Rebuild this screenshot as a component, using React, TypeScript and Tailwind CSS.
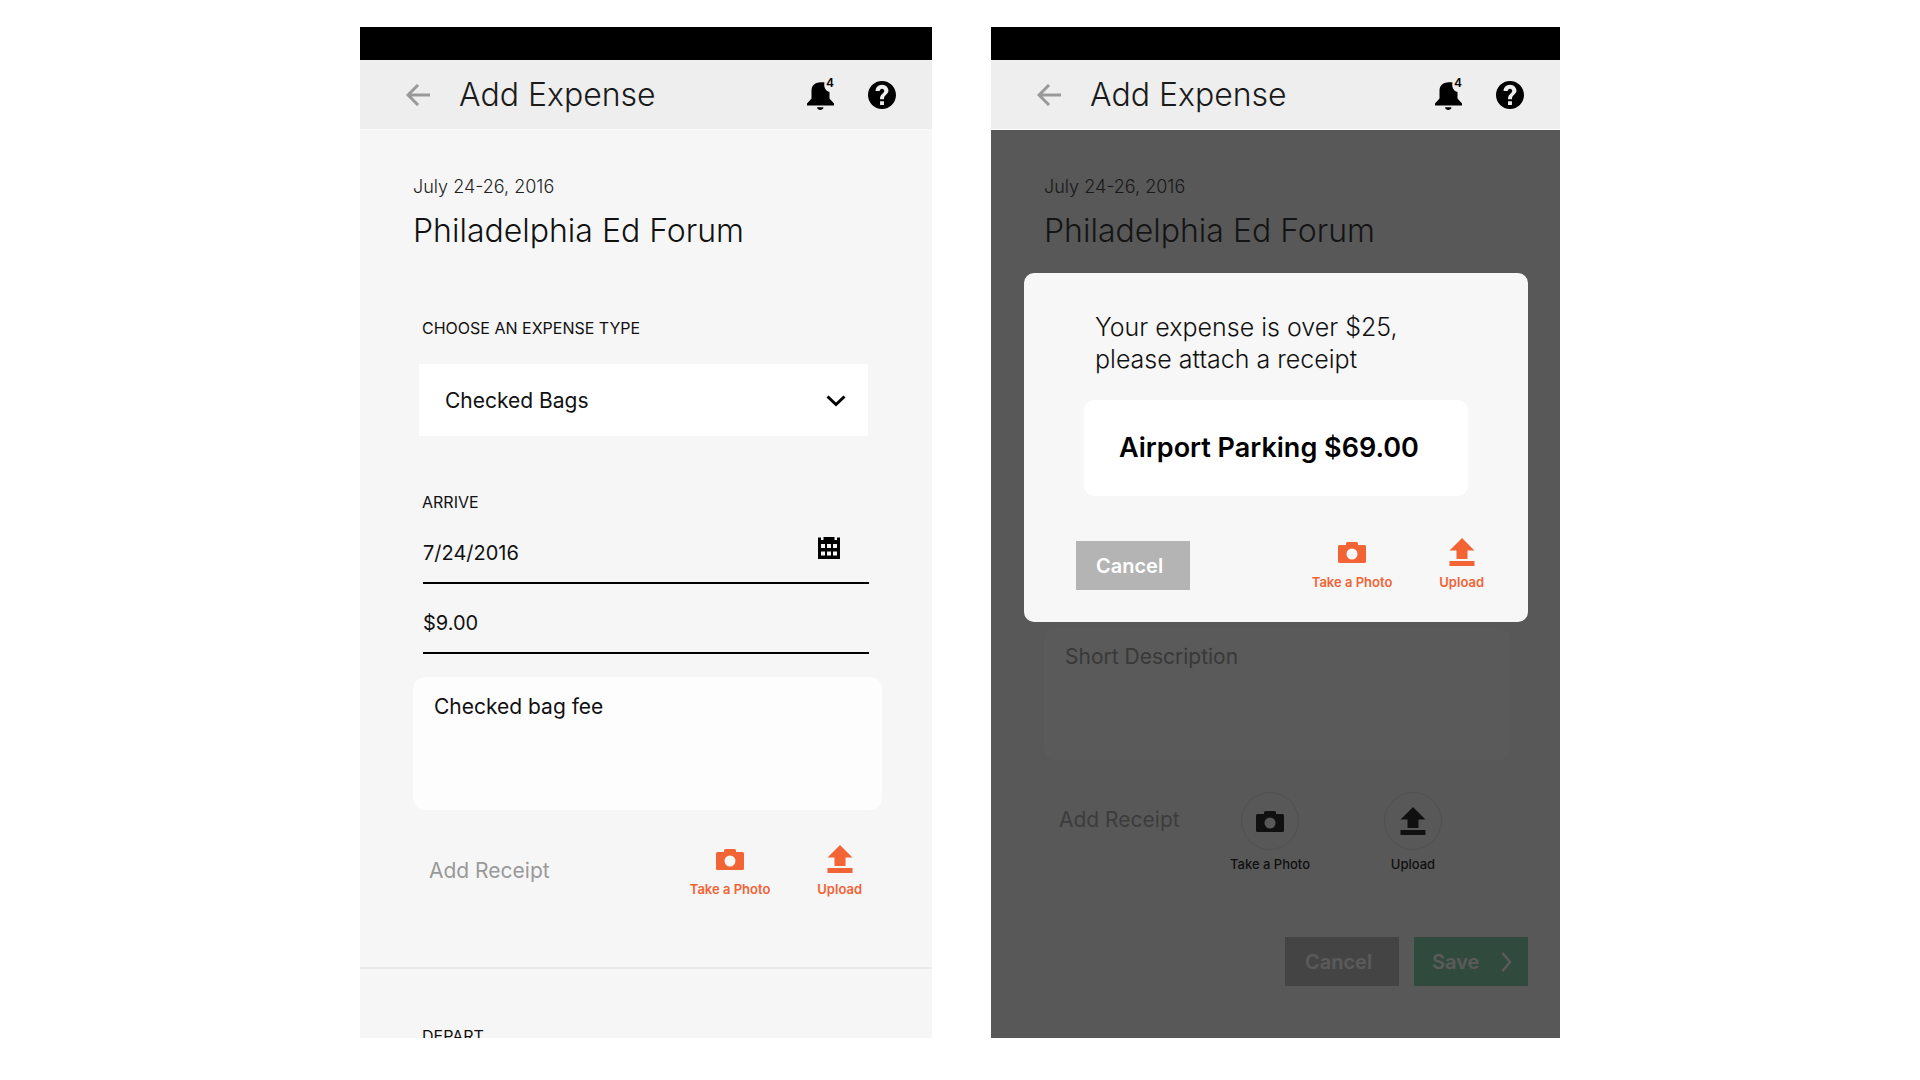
import { useState } from "react";
import type { ReactNode } from "react";

const EXPENSE_TYPES = ["Checked Bags", "Airport Parking", "Meals", "Taxi"];

function BackIcon() {
  return (
    <svg width="24" height="22" viewBox="0 0 24 22" fill="none" stroke="#999999" strokeWidth="3">
      <path d="M12 1 2 11l10 10M2 11h22" />
    </svg>
  );
}

function BellIcon() {
  return (
    <svg width="27" height="33" viewBox="0 0 27 33" fill="currentColor">
      <path d="M12 4.500C14 4 16 4 17.500 4.500C16.500 9 18.500 13 22.500 14V20.500L27 25.500V27.500H0V25.500L4.500 20.500V12.500C4.500 8 7.500 5 12 4.500Z" />
      <path d="M10 29.300h6.500c-.4 3.600-6.100 3.600-6.500 0z" />
    </svg>
  );
}

function HelpIcon() {
  return (
    <svg width="28" height="28" viewBox="2 2 20 20" fill="currentColor">
      <path
        fillRule="evenodd"
        d="M12 2C6.480 2 2 6.480 2 12s4.480 10 10 10 10-4.480 10-10S17.520 2 12 2zm1.400 17.200h-2.800v-2.700h2.800v2.700zm2.070-7.950-.9.920c-.72.730-1.170 1.330-1.170 2.830h-2.800v-.5c0-1.100.45-2.100 1.170-2.830l1.240-1.260c.37-.36.590-.86.590-1.210 0-.9-.7-1.600-1.600-1.600s-1.600.7-1.600 1.600H7.400c0-2.510 1.990-4.500 4.600-4.500s4.600 1.990 4.600 4.300c0 .88-.56 1.680-1.130 2.250z"
      />
    </svg>
  );
}

function ChevronDownIcon() {
  return (
    <svg width="20" height="12" viewBox="0 0 20 12" fill="none" stroke="#000000" strokeWidth="3">
      <path d="m1.500 1.500 8.500 8 8.500-8" />
    </svg>
  );
}

function CalendarIcon() {
  return (
    <svg width="22" height="22" viewBox="0 0 22 22">
      <path
        fill="#000000"
        fillRule="evenodd"
        d="M0 .5h3v2.500h2.500V0h11v3H19V.5h3V22H0zM3 7v4h4V7zm6 0v4h4V7zm6 0v4h4V7zM3 14.500v4h4v-4zm6 0v4h4v-4zm6 0v4h4v-4z"
      />
    </svg>
  );
}

function CameraIcon() {
  return (
    <svg width="28" height="21" viewBox="0 0 28 21" fill="currentColor">
      <path
        fillRule="evenodd"
        d="M9.500 0h9a1.500 1.500 0 0 1 1.500 1.500V3h6.500A1.500 1.500 0 0 1 28 4.500v15a1.500 1.500 0 0 1-1.500 1.500h-25A1.500 1.500 0 0 1 0 19.500v-15A1.500 1.500 0 0 1 1.500 3H8V1.500A1.500 1.500 0 0 1 9.500 0zM14 6.500a5.500 5.500 0 1 0 0 11 5.500 5.500 0 0 0 0-11z"
      />
    </svg>
  );
}

function UploadIcon() {
  return (
    <svg width="26" height="28" viewBox="0 0 26 28" fill="currentColor">
      <path d="M13 0 25.500 12.500H18.500V21h-11v-8.500H.5zM.5 23h25v5H.5z" />
    </svg>
  );
}

function PhoneHeader() {
  return (
    <header className="border-b border-[#fafafa] bg-[#eeeeee]">
      <div className="h-[33px] bg-black" />
      <div className="flex h-[69px] items-center pr-9 pl-[46px]">
        <button type="button" aria-label="Back" className="shrink-0">
          <BackIcon />
        </button>
        <h1 className="ml-[29px] flex-1 pt-px text-[32px] leading-10 font-light text-[#1a1a1a]">
          Add Expense
        </h1>
        <button type="button" aria-label="Notifications" className="relative shrink-0">
          <BellIcon />
          <span className="absolute top-0 right-0 text-xs leading-[10px] font-semibold">4</span>
        </button>
        <button type="button" aria-label="Help" className="ml-[34px] shrink-0">
          <HelpIcon />
        </button>
      </div>
    </header>
  );
}

function TripTitle() {
  return (
    <div className="px-[53px] pt-[45px]">
      <p className="text-lg leading-6 font-light text-[#222222]">July 24-26, 2016</p>
      <h2 className="mt-3 text-[32px] leading-10 font-light text-[#111111]">Philadelphia Ed Forum</h2>
    </div>
  );
}

function IconAction({ icon, label }: { icon: ReactNode; label: string }) {
  return (
    <button type="button" className="flex flex-col items-center gap-2 text-[#f26336]">
      <span className="flex h-7 items-center">{icon}</span>
      <span className="text-[13px] leading-4 font-semibold">{label}</span>
    </button>
  );
}

function RoundAction({ icon, label }: { icon: ReactNode; label: string }) {
  return (
    <button type="button" className="flex flex-col items-center gap-[6px]">
      <span className="flex size-[58px] items-center justify-center rounded-full border border-[#dddddd]">
        {icon}
      </span>
      <span className="text-[13px] leading-4 font-medium">{label}</span>
    </button>
  );
}

function ExpenseForm() {
  const [type, setType] = useState("Checked Bags");
  const [arrive, setArrive] = useState("7/24/2016");
  const [amount, setAmount] = useState("$9.00");
  const [description, setDescription] = useState("Checked bag fee");

  return (
    <section className="flex flex-col overflow-hidden bg-[#f6f6f6]">
      <PhoneHeader />
      <form className="min-h-0 flex-1 overflow-hidden text-[#111111]">
        <TripTitle />

        <label htmlFor="type" className="mt-[65px] ml-[62px] block text-base leading-6">
          CHOOSE AN EXPENSE TYPE
        </label>
        <div className="mt-6 mr-16 ml-[59px] grid items-center">
          <select
            id="type"
            value={type}
            onChange={(e) => setType(e.target.value)}
            className="col-start-1 row-start-1 h-[72px] appearance-none bg-white px-[26px] pt-[2px] text-[21px]"
          >
            {EXPENSE_TYPES.map((name) => (
              <option key={name}>{name}</option>
            ))}
          </select>
          <span className="pointer-events-none col-start-1 row-start-1 mr-[22px] justify-self-end pt-[2px]">
            <ChevronDownIcon />
          </span>
        </div>

        <label htmlFor="arrive" className="mt-[54px] ml-[62px] block text-base leading-6">
          ARRIVE
        </label>
        <div className="mt-[22px] mr-[63px] ml-[63px] flex items-start border-b-2 border-black pb-3">
          <input
            id="arrive"
            value={arrive}
            onChange={(e) => setArrive(e.target.value)}
            className="h-[34px] min-w-0 flex-1 text-xl"
          />
          <button type="button" aria-label="Pick a date" className="mr-[29px] pt-px">
            <CalendarIcon />
          </button>
        </div>
        <div className="mt-[22px] mr-[63px] ml-[63px] flex border-b-2 border-black pb-3">
          <input
            aria-label="Amount"
            value={amount}
            onChange={(e) => setAmount(e.target.value)}
            className="h-[34px] min-w-0 flex-1 text-xl"
          />
        </div>

        <div className="mt-[23px] mr-[50px] ml-[53px] flex">
          <textarea
            aria-label="Description"
            value={description}
            onChange={(e) => setDescription(e.target.value)}
            className="h-[133px] flex-1 resize-none rounded-xl bg-[#fdfdfd] px-[21px] pt-4 text-[21px] leading-7"
          />
        </div>

        <div className="mt-[35px] mr-[70px] ml-[69px] flex items-center">
          <span className="flex-1 text-[21px] leading-7 text-[#999999]">Add Receipt</span>
          <div className="flex gap-[47px]">
            <IconAction icon={<CameraIcon />} label="Take a Photo" />
            <IconAction icon={<UploadIcon />} label="Upload" />
          </div>
        </div>

        <hr className="mt-[70px] border-t-2 border-[#ebebeb]" />
        <p className="mt-[55px] ml-[62px] text-base leading-6">DEPART</p>
      </form>
    </section>
  );
}

function ReceiptDialog() {
  return (
    <div
      role="dialog"
      aria-label="Receipt required"
      className="mt-[143px] mr-8 ml-[33px] rounded-[10px] bg-[#f7f7f7] pt-[38px] pb-8"
    >
      <p className="px-[71px] text-[25px] leading-8 font-light text-[#111111]">
        Your expense is over $25,
        <br />
        please attach a receipt
      </p>
      <div className="mx-[60px] mt-[25px] rounded-[10px] bg-white px-[35px] py-8">
        <p className="text-[27px] leading-8 font-semibold whitespace-nowrap">Airport Parking $69.00</p>
      </div>
      <div className="mt-[42px] flex items-end justify-between pr-11 pl-[52px]">
        <button
          type="button"
          className="h-[49px] w-[114px] bg-[#b4b4b4] pl-5 text-left text-xl font-semibold text-white"
        >
          Cancel
        </button>
        <div className="flex gap-[47px]">
          <IconAction icon={<CameraIcon />} label="Take a Photo" />
          <IconAction icon={<UploadIcon />} label="Upload" />
        </div>
      </div>
    </div>
  );
}

function ReceiptPrompt() {
  return (
    <section className="flex flex-col overflow-hidden bg-[#f6f6f6]">
      <PhoneHeader />
      <div className="relative min-h-0 flex-1 overflow-hidden">
        <TripTitle />

        <div className="mt-[377px] mr-[50px] ml-[53px] flex">
          <textarea
            aria-label="Short Description"
            placeholder="Short Description"
            className="h-[132px] flex-1 resize-none rounded-xl bg-[#fdfdfd] px-[21px] pt-[15px] text-[21px] leading-7 placeholder:text-[#8c8c8c]"
          />
        </div>

        <div className="mt-8 mr-[118px] ml-[68px] flex">
          <span className="mt-[14px] flex-1 text-[21px] leading-7 text-[#999999]">Add Receipt</span>
          <div className="flex gap-[74px]">
            <RoundAction icon={<CameraIcon />} label="Take a Photo" />
            <RoundAction icon={<UploadIcon />} label="Upload" />
          </div>
        </div>

        <div className="mt-[65px] mr-8 flex justify-end gap-[15px] text-xl font-semibold text-white">
          <button type="button" className="h-[49px] w-[114px] bg-[#b4b4b4] pl-5 text-left">
            Cancel
          </button>
          <button
            type="button"
            className="flex h-[49px] w-[114px] items-center justify-between bg-[#6ec89b] pr-4 pl-[18px]"
          >
            Save
            <svg width="11" height="20" viewBox="0 0 11 20" fill="none" stroke="currentColor" strokeWidth="2.500">
              <path d="m1.500 1 7.500 9-7.500 9" />
            </svg>
          </button>
        </div>

        <div className="absolute inset-0 bg-[#171717]/71">
          <ReceiptDialog />
        </div>
      </div>
    </section>
  );
}

export default function App() {
  return (
    <main className="flex h-screen justify-center bg-white pt-[27px] pb-[42px] font-['Inter',sans-serif] text-black">
      <div className="grid w-full max-w-[1200px] grid-cols-[572fr_569fr] grid-rows-1 gap-[59px]">
        <ExpenseForm />
        <ReceiptPrompt />
      </div>
    </main>
  );
}
